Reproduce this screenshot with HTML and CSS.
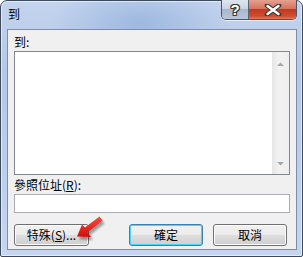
FILE: index.html
```html
<!DOCTYPE html>
<html>
<head>
<meta charset="utf-8">
<link rel="stylesheet" href="styles.css">
</head>
<body>
<div class="window">
  <div class="titlebar">
    <span class="title">到</span>
    <div class="caption">
      <div class="cap-btn help"><span>?</span></div>
      <div class="cap-btn close">
        <svg width="18" height="12" viewBox="0 0 18 12"><path d="M3 1.5 L15 10.5 M15 1.5 L3 10.5" stroke="#3b3b3b" stroke-width="4.6" stroke-linecap="round"/><path d="M3.5 2 L14.5 10 M14.5 2 L3.5 10" stroke="#fff" stroke-width="2.4" stroke-linecap="round"/></svg>
      </div>
    </div>
  </div>
  <div class="client">
    <div class="label first">到:</div>
    <div class="listbox">
      <div class="list-area"></div>
      <div class="scrollbar">
        <svg class="arr" width="17" height="8" viewBox="0 0 17 8"><path d="M5 6 L8.5 2.5 L12 6 Z" fill="#a7a7a7"/></svg>
        <div class="track"></div>
        <svg class="arr" width="17" height="8" viewBox="0 0 17 8"><path d="M5 2 L8.5 5.5 L12 2 Z" fill="#a7a7a7"/></svg>
      </div>
    </div>
    <div class="label">參照位址(<u>R</u>):</div>
    <div class="input"></div>
    <div class="buttons">
      <div class="btn">特殊(<u>S</u>)...</div>
      <div class="btn default">確定</div>
      <div class="btn">取消</div>
    </div>
  </div>
  <svg class="pointer" width="40" height="34" viewBox="0 0 40 34">
    <defs>
      <filter id="sh" x="-30%" y="-30%" width="160%" height="160%"><feGaussianBlur stdDeviation="1.3"/></filter>
      <linearGradient id="rg" x1="0" y1="0" x2="0" y2="1"><stop offset="0" stop-color="#ff4a3a"/><stop offset="1" stop-color="#d40c0c"/></linearGradient>
    </defs>
    <path d="M25.5 3.5 L11 14.5 L8 11.5 L3 23.5 L17 24 L13.5 19.5 L28.5 7.5 Z" fill="#000" opacity="0.35" filter="url(#sh)" transform="translate(2,3)"/>
    <path d="M25.5 3.5 L11 14.5 L8 11.5 L3 23.5 L17 24 L13.5 19.5 L28.5 7.5 Z" fill="url(#rg)"/>
  </svg>
</div>
</body>
</html>
```
FILE: styles.css
```css
* { box-sizing: border-box; }
html, body { margin: 0; padding: 0; background: #fff; }
body { font-family: "Noto Sans CJK TC", "Noto Sans", sans-serif; font-size: 12px; color: #000; }

.window {
  position: relative;
  width: 303px;
  height: 257px;
  border: 1px solid #3c4a5c;
  border-radius: 7px 7px 2px 2px;
  background:
    radial-gradient(ellipse 90px 40px at 140px 22px, rgba(150,178,222,0.8), rgba(150,178,222,0) 100%),
    linear-gradient(180deg, #c4d4ee 0%, #b3c7e8 30%, #bccfed 70%, #c6d6f0 100%);
  display: flex;
  flex-direction: column;
  padding: 0 5px 6px 6px;
  box-shadow: inset 0 0 0 1px rgba(255,255,255,0.55);
}

.titlebar {
  height: 28px;
  display: flex;
  align-items: flex-start;
}
.title {
  margin-top: 5px;
  margin-left: 1px;
  line-height: 16px;
  font-size: 12px;
  color: #000;
}
.caption {
  margin-left: auto;
  margin-top: -1px;
  display: flex;
  height: 20px;
  border: 1px solid #4a5568;
  border-top: none;
  border-radius: 0 0 5px 5px;
  overflow: hidden;
  box-shadow: 0 1px 0 rgba(255,255,255,0.6);
}
.cap-btn {
  height: 19px;
  display: flex;
  align-items: center;
  justify-content: center;
}
.help {
  width: 27px;
  border-right: 1px solid #5a6577;
  background: linear-gradient(180deg, #dfe6ef 0%, #c9d3e0 45%, #a8b7cb 50%, #b8c6d9 100%);
}
.help span {
  font-family: "Liberation Sans", sans-serif;
  font-weight: bold;
  font-size: 15px;
  color: #fff;
  text-shadow: 1px 0 #3b3b3b, -1px 0 #3b3b3b, 0 1px #3b3b3b, 0 -1px #3b3b3b, 1px 1px #3b3b3b, -1px -1px #3b3b3b, 1px -1px #3b3b3b, -1px 1px #3b3b3b;
  line-height: 15px;
}
.close {
  width: 47px;
  background: linear-gradient(180deg, #e6a08f 0%, #d7735e 45%, #c3391f 50%, #cf4d2f 85%, #e07b5c 100%);
}

.client {
  flex: 1;
  background: #f0f0f0;
  border: 1px solid #7d8ea6;
  padding: 3px 6px 0 6px;
  display: flex;
  flex-direction: column;
}
.label {
  line-height: 16px;
  height: 17px;
  padding-left: 0;
}
.label.first { margin-top: 1px; }
.label u { text-decoration: underline; text-underline-offset: 1px; }

.listbox {
  height: 124px;
  border: 1px solid #828790;
  background: #fff;
  display: flex;
  margin-bottom: 2px;
}
.list-area { flex: 1; }
.scrollbar {
  width: 17px;
  background: linear-gradient(90deg, #e6e6e6, #f2f2f2 40%, #eeeeee);
  display: flex;
  flex-direction: column;
}
.scrollbar .arr { display: block; margin-top: 8px; }
.scrollbar .track { flex: 1; }
.scrollbar .arr:last-child { margin-top: 0; margin-bottom: 6px; }

.input {
  height: 19px;
  border: 1px solid #abadb3;
  background: #fff;
  margin-top: 0;
}

.buttons {
  margin-top: 11px;
  display: flex;
}
.btn {
  width: 75px;
  height: 22px;
  border: 1px solid #707070;
  border-radius: 3px;
  background: linear-gradient(180deg, #f2f2f2 0%, #ebebeb 48%, #dddddd 52%, #cfcfcf 100%);
  box-shadow: inset 0 0 0 1px #fcfcfc;
  display: flex;
  align-items: center;
  justify-content: center;
  line-height: 16px;
}
.btn u { text-decoration: underline; text-underline-offset: 1px; }
.btn.default {
  margin-left: 40px;
  border-color: #3c7fb1;
  box-shadow: inset 0 0 0 1px #48d4f9;
  width: 74px;
}
.btn:last-child { margin-left: 10px; width: 74px; }

.pointer {
  position: absolute;
  left: 73px;
  top: 212px;
}
```
